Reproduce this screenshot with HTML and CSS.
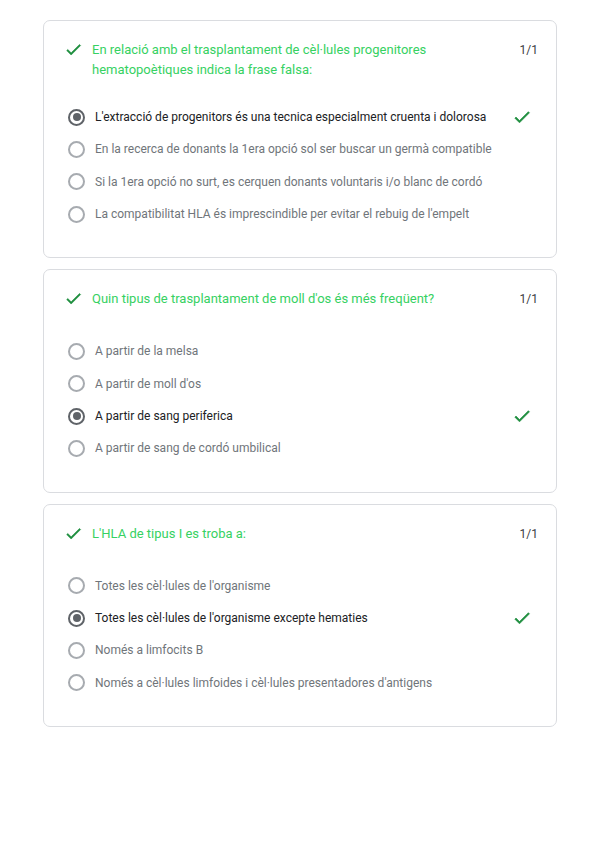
FILE: index.html
```html
<!DOCTYPE html>
<html lang="ca">
<head>
<meta charset="utf-8">
<title>Respostes</title>
<link rel="stylesheet" href="styles.css">
</head>
<body>
<main class="list">
  <section class="card">
    <div class="header">
      <svg class="qcheck" viewBox="0 0 24 24"><path d="M9 16.2L4.8 12l-1.4 1.4L9 19 21 7l-1.4-1.4L9 16.2z"/></svg>
      <div class="question">En relació amb el trasplantament de cèl·lules progenitores hematopoètiques indica la frase falsa:</div>
      <div class="points">1/1</div>
    </div>
    <div class="options">
      <div class="option selected"><span class="radio"></span><span class="label">L'extracció de progenitors és una tecnica especialment cruenta i dolorosa</span><svg class="ocheck" viewBox="0 0 24 24"><path d="M9 16.2L4.8 12l-1.4 1.4L9 19 21 7l-1.4-1.4L9 16.2z"/></svg></div>
      <div class="option"><span class="radio"></span><span class="label">En la recerca de donants la 1era opció sol ser buscar un germà compatible</span></div>
      <div class="option"><span class="radio"></span><span class="label">Si la 1era opció no surt, es cerquen donants voluntaris i/o blanc de cordó</span></div>
      <div class="option"><span class="radio"></span><span class="label">La compatibilitat HLA és imprescindible per evitar el rebuig de l'empelt</span></div>
    </div>
  </section>
  <section class="card">
    <div class="header">
      <svg class="qcheck" viewBox="0 0 24 24"><path d="M9 16.2L4.8 12l-1.4 1.4L9 19 21 7l-1.4-1.4L9 16.2z"/></svg>
      <div class="question">Quin tipus de trasplantament de moll d'os és més freqüent?</div>
      <div class="points">1/1</div>
    </div>
    <div class="options">
      <div class="option"><span class="radio"></span><span class="label">A partir de la melsa</span></div>
      <div class="option"><span class="radio"></span><span class="label">A partir de moll d'os</span></div>
      <div class="option selected"><span class="radio"></span><span class="label">A partir de sang periferica</span><svg class="ocheck" viewBox="0 0 24 24"><path d="M9 16.2L4.8 12l-1.4 1.4L9 19 21 7l-1.4-1.4L9 16.2z"/></svg></div>
      <div class="option"><span class="radio"></span><span class="label">A partir de sang de cordó umbilical</span></div>
    </div>
  </section>
  <section class="card">
    <div class="header">
      <svg class="qcheck" viewBox="0 0 24 24"><path d="M9 16.2L4.8 12l-1.4 1.4L9 19 21 7l-1.4-1.4L9 16.2z"/></svg>
      <div class="question">L'HLA de tipus I es troba a:</div>
      <div class="points">1/1</div>
    </div>
    <div class="options">
      <div class="option"><span class="radio"></span><span class="label">Totes les cèl·lules de l'organisme</span></div>
      <div class="option selected"><span class="radio"></span><span class="label">Totes les cèl·lules de l'organisme excepte hematies</span><svg class="ocheck" viewBox="0 0 24 24"><path d="M9 16.2L4.8 12l-1.4 1.4L9 19 21 7l-1.4-1.4L9 16.2z"/></svg></div>
      <div class="option"><span class="radio"></span><span class="label">Només a limfocits B</span></div>
      <div class="option"><span class="radio"></span><span class="label">Només a cèl·lules limfoides i cèl·lules presentadores d'antigens</span></div>
    </div>
  </section>
</main>
</body>
</html>
```

FILE: styles.css
```css
html, body {
  margin: 0;
  padding: 0;
  background: #ffffff;
}

body {
  font-family: Roboto, "Liberation Sans", Arial, sans-serif;
  color: #202124;
}

.list {
  display: flex;
  flex-direction: column;
  gap: 11px;
  padding: 20px 42px 0 43px;
}

.card {
  border: 1px solid #dadce0;
  border-radius: 7px;
  padding: 19px 20px 27px 20px;
}

.header {
  display: flex;
  align-items: flex-start;
  min-height: 25px;
}

.qcheck {
  width: 19px;
  height: 19px;
  margin-top: 0;
  flex: none;
  fill: #1e8e3e;
  stroke: #1e8e3e;
  stroke-width: 0.7;
}

.question {
  flex: 1;
  margin-left: 9px;
  font-size: 13px;
  line-height: 20px;
  color: #36d162;
  padding-right: 60px;
}

.points {
  flex: none;
  font-size: 12px;
  line-height: 20px;
  color: #3c4043;
  margin-right: -2px;
}

.options {
  margin-top: 21px;
  display: flex;
  flex-direction: column;
}

.option {
  display: flex;
  align-items: center;
  height: 32.33px;
  padding-left: 4px;
  font-size: 12px;
  color: #70757a;
}

.radio {
  flex: none;
  box-sizing: border-box;
  width: 17px;
  height: 17px;
  border: 2px solid #a7abb0;
  border-radius: 50%;
  position: relative;
}

.option.selected {
  color: #202124;
}

.option.selected .radio {
  border-color: #5f6368;
}

.option.selected .radio::after {
  content: "";
  position: absolute;
  left: 2.5px;
  top: 2.5px;
  width: 8px;
  height: 8px;
  border-radius: 50%;
  background: #5f6368;
}

.label {
  flex: 1;
  margin-left: 10px;
}

.ocheck {
  flex: none;
  width: 20px;
  height: 20px;
  margin-right: 4px;
  fill: #1e8e3e;
  stroke: #1e8e3e;
  stroke-width: 0.7;
}
```
